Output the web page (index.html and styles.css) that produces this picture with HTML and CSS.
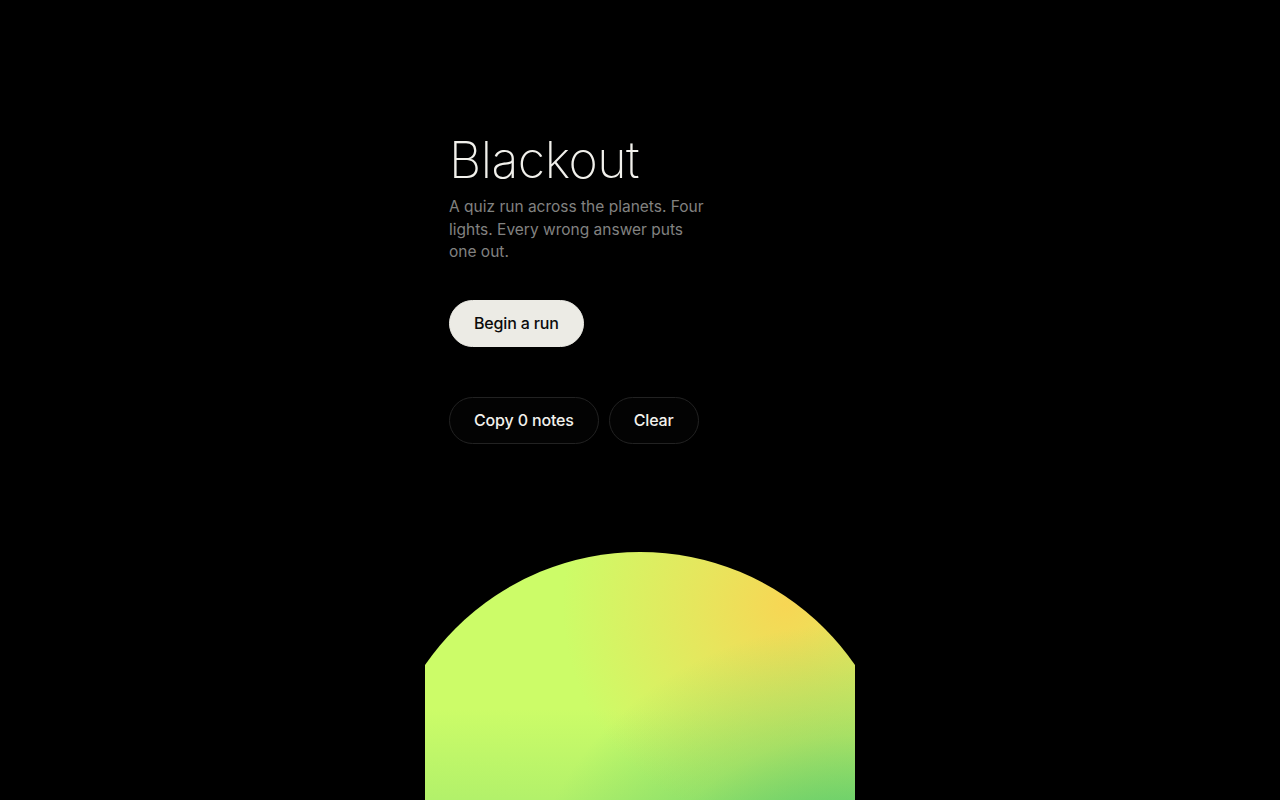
FILE: index.html
```html
<!DOCTYPE html>
<html lang="en">
<head>
<meta charset="utf-8">
<title>Blackout</title>
<link rel="stylesheet" href="styles.css">
</head>
<body>
<main class="stage">
  <section class="intro">
    <h1 class="title">Blackout</h1>
    <p class="lede">A quiz run across the planets. Four lights. Every wrong answer puts one out.</p>
    <button class="btn btn-primary" type="button">Begin a run</button>
    <div class="notes">
      <button class="btn btn-ghost" type="button">Copy 0 notes</button>
      <button class="btn btn-ghost" type="button">Clear</button>
    </div>
  </section>
  <div class="planet-wrap">
    <div class="planet"></div>
  </div>
</main>
</body>
</html>
```
FILE: styles.css
```css
html, body {
  margin: 0;
  padding: 0;
  background: #000;
  height: 100%;
  overflow: hidden;
}
body {
  font-family: Inter, "Noto Sans", sans-serif;
  color: #ecebe5;
}
.stage {
  width: 430px;
  margin: 0 auto;
  overflow: hidden;
  height: 800px;
}
.intro {
  padding: 133px 24px 0;
}
.title {
  margin: 0;
  font-size: 50px;
  font-weight: 200;
  line-height: 1.1;
  letter-spacing: -0.01em;
  color: #f2f1ec;
}
.lede {
  margin: 8px 0 0;
  max-width: 258px;
  font-size: 15.5px;
  line-height: 22.5px;
  color: #828280;
}
.btn {
  font-family: Inter, "Noto Sans", sans-serif;
  font-size: 16px;
  font-weight: 500;
  letter-spacing: -0.01em;
  height: 47px;
  padding: 0 24px;
  border-radius: 999px;
  cursor: pointer;
}
.btn-primary {
  margin-top: 36px;
  background: #ecebe5;
  color: #0b0b0b;
  border: 1px solid #ecebe5;
}
.notes {
  display: flex;
  gap: 10px;
  margin-top: 50px;
}
.btn-ghost {
  background: #030303;
  color: #f2f1ec;
  border: 1px solid #222;
}
.planet-wrap {
  margin-top: 108px;
  display: flex;
  justify-content: center;
}
.planet {
  flex: none;
  width: 522px;
  height: 522px;
  border-radius: 50%;
  background:
    radial-gradient(circle at 90% 78%, rgba(76, 196, 108, 1) 0%, rgba(84, 198, 108, 0.9) 20%, rgba(96, 204, 106, 0.4) 36%, rgba(100, 205, 105, 0) 54%),
    radial-gradient(circle at 78% 10%, rgba(247, 214, 84, 1) 0%, rgba(242, 220, 88, 0.7) 14%, rgba(220, 240, 100, 0) 36%),
    linear-gradient(to bottom, rgba(140, 225, 110, 0) 30%, rgba(130, 220, 110, 0.4) 50%, rgba(100, 210, 110, 0.7) 70%),
    #ccfc68;
}
```
